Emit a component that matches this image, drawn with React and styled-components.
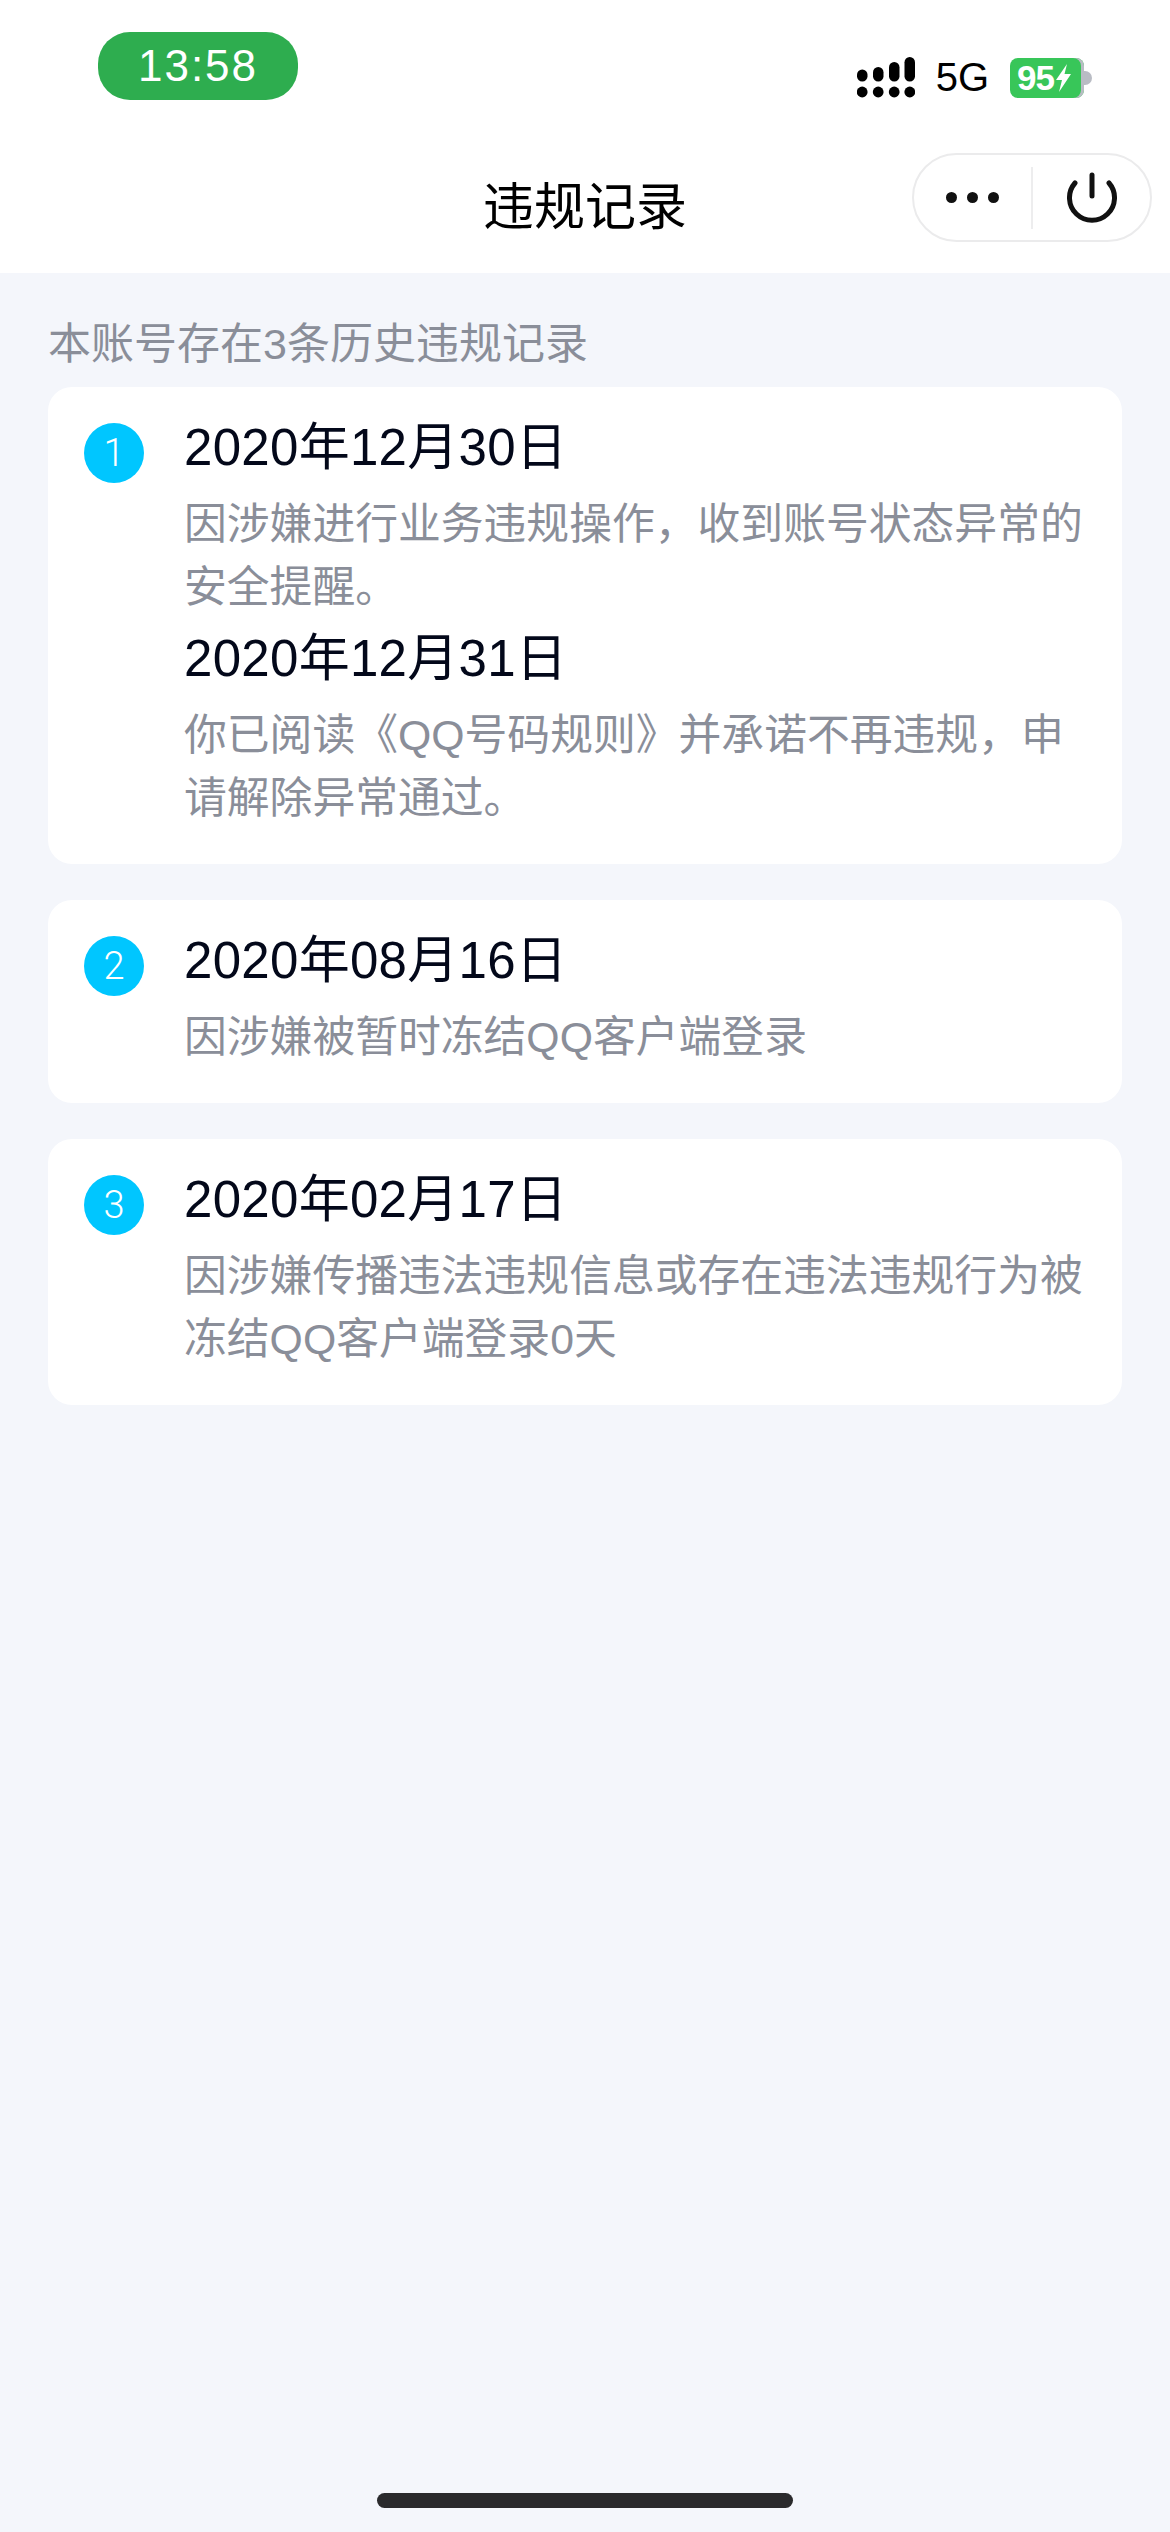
import React from 'react'
import styled, {createGlobalStyle} from 'styled-components'

const records = [
	{
		entries: [
			{date: '2020年12月30日', text: '因涉嫌进行业务违规操作，收到账号状态异常的安全提醒。'},
			{date: '2020年12月31日', text: '你已阅读《QQ号码规则》并承诺不再违规，申请解除异常通过。'},
		],
	},
	{entries: [{date: '2020年08月16日', text: '因涉嫌被暂时冻结QQ客户端登录'}]},
	{entries: [{date: '2020年02月17日', text: '因涉嫌传播违法违规信息或存在违法违规行为被冻结QQ客户端登录0天'}]},
]

const SignalIcon = () => (
	<svg width="58" height="41" viewBox="0 0 58 41" fill="#000">
		<rect x="0" y="12.5" width="10.5" height="12" rx="5.2" />
		<rect x="16" y="10" width="10.5" height="14.5" rx="5.2" />
		<rect x="32" y="5" width="10.5" height="19.5" rx="5.2" />
		<rect x="47.5" y="0" width="10.5" height="24.5" rx="5.2" />
		<circle cx="5.2" cy="35" r="5.4" />
		<circle cx="21.2" cy="35" r="5.4" />
		<circle cx="37.2" cy="35" r="5.4" />
		<circle cx="52.8" cy="35" r="5.4" />
	</svg>
)

const Bolt = () => (
	<svg width="15" height="28" viewBox="0 0 15 28" fill="#fff">
		<path d="M11 0 L0 16 H6 L3 28 L15 10 H8.5 Z" />
	</svg>
)

const PowerIcon = () => (
	<svg width="50" height="51" viewBox="0 0 50 51" fill="none" stroke="#111" strokeWidth="5" strokeLinecap="round">
		<path d="M8 11 A22.5 22.5 0 1 0 42 11" />
		<path d="M25 3 V24" />
	</svg>
)

const App = () => {
	return (
		<Page>
			<GlobalStyle />
			<Header>
				<StatusBar>
					<Clock>13:58</Clock>
					<StatusRight>
						<SignalIcon />
						<Network>5G</Network>
						<Battery>
							<BatteryBody>
								<BatteryLevel>95</BatteryLevel>
								<Bolt />
							</BatteryBody>
							<BatteryCap />
						</Battery>
					</StatusRight>
				</StatusBar>
				<NavBar>
					<NavTitle>违规记录</NavTitle>
					<Capsule>
						<CapsuleButton>
							<Dots>
								<Dot />
								<Dot />
								<Dot />
							</Dots>
						</CapsuleButton>
						<CapsuleDivider />
						<CapsuleButton>
							<PowerIcon />
						</CapsuleButton>
					</Capsule>
				</NavBar>
			</Header>
			<Content>
				<Summary>本账号存在3条历史违规记录</Summary>
				<List>
					{records.map((record, i) => (
						<Card key={i}>
							<Badge>{i + 1}</Badge>
							<Entries>
								{record.entries.map(entry => (
									<Entry key={entry.date}>
										<DateLine>{entry.date}</DateLine>
										<Description>{entry.text}</Description>
									</Entry>
								))}
							</Entries>
						</Card>
					))}
				</List>
			</Content>
			<HomeBar />
		</Page>
	)
}

export default App

const GlobalStyle = createGlobalStyle`
	* {
		box-sizing: border-box;
	}
	body {
		margin: 0;
		background: #F4F6FB;
		font-family: "Liberation Sans", "Noto Sans CJK SC", sans-serif;
	}
`
const Page = styled.div`
	width: 1170px;
	height: 2532px;
	background: #F4F6FB;
	display: flex;
	flex-direction: column;
	overflow: hidden;
`
const Header = styled.div`
	background: #fff;
	height: 273px;
	flex-shrink: 0;
`
const StatusBar = styled.div`
	height: 132px;
	padding: 32px 78px 0 98px;
	display: flex;
	justify-content: space-between;
	align-items: flex-start;
`
const Clock = styled.div`
	width: 200px;
	height: 68px;
	border-radius: 32px;
	background: #2EAD4F;
	color: #fff;
	font-size: 44px;
	letter-spacing: 2px;
	display: flex;
	align-items: center;
	justify-content: center;
`
const StatusRight = styled.div`
	display: flex;
	align-items: center;
	margin-top: 25px;
	height: 41px;
`
const Network = styled.div`
	font-size: 40px;
	line-height: 41px;
	color: #000;
	margin-left: 21px;
`
const Battery = styled.div`
	display: flex;
	align-items: center;
	margin-left: 21px;
`
const BatteryBody = styled.div`
	width: 74px;
	height: 40px;
	border-radius: 8px;
	background: #38C659;
	display: flex;
	align-items: center;
	padding-left: 7px;
	gap: 2px;
	box-shadow: inset -3px 0 0 #B9BCC4;
`
const BatteryLevel = styled.span`
	font-size: 35px;
	font-weight: 700;
	color: #fff;
	line-height: 40px;
	letter-spacing: -1px;
`
const BatteryCap = styled.div`
	width: 8px;
	height: 14px;
	border-radius: 0 7px 7px 0;
	background: #B9BCC4;
`
const NavBar = styled.div`
	height: 141px;
	position: relative;
	display: flex;
	align-items: center;
	justify-content: center;
`
const NavTitle = styled.div`
	font-size: 51px;
	color: #000;
`
const Capsule = styled.div`
	position: absolute;
	right: 18px;
	top: 21px;
	width: 240px;
	height: 89px;
	border: 2px solid #EBEBEC;
	border-radius: 45px;
	background: #fff;
	display: flex;
	align-items: center;
`
const CapsuleButton = styled.div`
	flex: 1;
	display: flex;
	align-items: center;
	justify-content: center;
`
const CapsuleDivider = styled.div`
	width: 2px;
	height: 62px;
	background: #EDEDEE;
`
const Dots = styled.div`
	display: flex;
	gap: 10px;
`
const Dot = styled.div`
	width: 11px;
	height: 11px;
	border-radius: 50%;
	background: #111;
`
const Content = styled.div`
	padding: 0 48px;
`
const Summary = styled.div`
	font-size: 43px;
	line-height: 60px;
	color: #8A8E99;
	margin-top: 41px;
	margin-bottom: 13px;
`
const List = styled.div`
	display: flex;
	flex-direction: column;
	gap: 36px;
`
const Card = styled.div`
	background: #fff;
	border-radius: 24px;
	padding: 26px 30px 34px 36px;
	display: flex;
	align-items: flex-start;
`
const Badge = styled.div`
	width: 60px;
	height: 60px;
	margin-top: 10px;
	flex-shrink: 0;
	border-radius: 50%;
	background: #00C6FF;
	color: #fff;
	font-family: Roboto, sans-serif;
	font-weight: 300;
	font-size: 38px;
	display: flex;
	align-items: center;
	justify-content: center;
`
const Entries = styled.div`
	margin-left: 40px;
	flex: 1;
	display: flex;
	flex-direction: column;
	gap: 5px;
`
const Entry = styled.div`
	display: flex;
	flex-direction: column;
`
const DateLine = styled.div`
	font-size: 51px;
	line-height: 70px;
	margin-bottom: 10px;
	letter-spacing: 0.3px;
	color: #03081A;
`
const Description = styled.div`
	font-size: 42.8px;
	line-height: 63px;
	color: #8A8E99;
`
const HomeBar = styled.div`
	margin-top: auto;
	margin-bottom: 24px;
	align-self: center;
	flex-shrink: 0;
	width: 416px;
	height: 15px;
	border-radius: 8px;
	background: #2A2A2C;
`
